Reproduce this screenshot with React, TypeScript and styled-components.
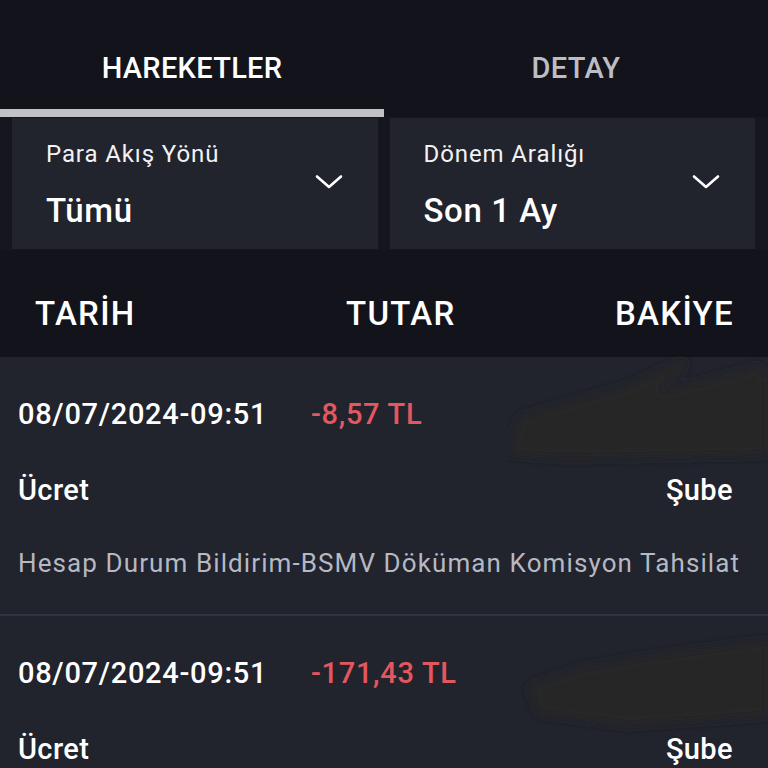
import React, { useState } from 'react';
import styled, { createGlobalStyle } from 'styled-components';

const GlobalStyle = createGlobalStyle`
  *, *::before, *::after {
    box-sizing: border-box;
  }

  body {
    margin: 0;
    background-color: #13131b;
    font-family: Roboto, 'Noto Sans', 'Liberation Sans', sans-serif;
    color: #fff;
  }
`;

const Page = styled.div`
  width: 768px;
  height: 768px;
  overflow: hidden;
  background-color: #13131b;
`;

const TabBar = styled.nav`
  display: grid;
  grid-template-columns: 384px 1fr;
  height: 117px;
`;

const Tab = styled.button<{ $active?: boolean }>`
  display: flex;
  align-items: center;
  justify-content: center;
  padding: 27px 0 0;
  margin: 0;
  border: 0;
  border-bottom: 8px solid ${(p) => (p.$active ? '#c2c2c6' : 'transparent')};
  background: transparent;
  font-family: inherit;
  font-size: 29px;
  font-weight: 500;
  letter-spacing: 0.3px;
  color: ${(p) => (p.$active ? '#ffffff' : '#bdbdc4')};
  cursor: pointer;
`;

const Filters = styled.div`
  display: grid;
  grid-template-columns: 1fr 1fr;
  gap: 12px;
  height: 133px;
  padding: 1px 13px 1px 12px;
  background-color: #16161e;
`;

const FilterCard = styled.div`
  display: flex;
  align-items: center;
  justify-content: space-between;
  padding: 0 35px 0 34px;
  background-color: #21232d;
`;

const FilterText = styled.div`
  display: flex;
  flex-direction: column;
  margin-top: 2px;
`;

const FilterLabel = styled.span`
  font-size: 24px;
  line-height: 28px;
  letter-spacing: 0.9px;
  color: #f2f2f4;
`;

const FilterValue = styled.span`
  margin-top: 24px;
  font-size: 33px;
  line-height: 38px;
  font-weight: 500;
  letter-spacing: 0.6px;
  color: #ffffff;
`;

const Chevron = styled.svg`
  width: 28px;
  height: 16px;
  margin-top: -4px;
  flex-shrink: 0;
`;

const TableHeader = styled.div`
  display: grid;
  grid-template-columns: 311px 1fr auto;
  align-items: center;
  height: 107px;
  padding: 20px 35px 0;
  font-size: 33px;
  font-weight: 500;
  line-height: 40px;
  letter-spacing: 1.3px;
  color: #ffffff;
  background-color: #13131b;
`;

const HeaderCell = styled.span<{ $align?: 'left' | 'right' }>`
  text-align: ${(p) => p.$align ?? 'left'};
  margin-right: ${(p) => (p.$align === 'right' ? '-1px' : '0')};
`;

const List = styled.ul`
  margin: 0;
  padding: 0;
  list-style: none;
  background-color: #21232d;
`;

const Item = styled.li`
  position: relative;
  padding: 37px 35px 31px 18px;
  border-bottom: 2px solid #313444;
`;

const TopRow = styled.div`
  display: grid;
  grid-template-columns: 293px auto;
  font-size: 29px;
  line-height: 40px;
  font-weight: 500;
  letter-spacing: 0.7px;
`;

const DateText = styled.span`
  color: #ffffff;
`;

const Amount = styled.span<{ $negative?: boolean }>`
  color: ${(p) => (p.$negative ? '#e2585e' : '#5fd38a')};
`;

const MetaRow = styled.div`
  display: flex;
  justify-content: space-between;
  margin-top: 36px;
  font-size: 29px;
  line-height: 40px;
  font-weight: 500;
  letter-spacing: 0.4px;
  color: #ffffff;
`;

const Description = styled.p`
  margin: 33px -20px 0 0;
  font-size: 26px;
  line-height: 40px;
  letter-spacing: 1.1px;
  color: #b6b8c2;
  white-space: nowrap;
`;

const Redaction = styled.svg`
  position: absolute;
  top: -20px;
  right: 0;
  width: 260px;
  height: 150px;
  pointer-events: none;
`;

type Movement = {
  date: string;
  amount: string;
  type: string;
  channel: string;
  description: string;
};

const movements: Movement[] = [
  {
    date: '08/07/2024-09:51',
    amount: '-8,57 TL',
    type: 'Ücret',
    channel: 'Şube',
    description: 'Hesap Durum Bildirim-BSMV Döküman Komisyon Tahsilat',
  },
  {
    date: '08/07/2024-09:51',
    amount: '-171,43 TL',
    type: 'Ücret',
    channel: 'Şube',
    description: 'Hesap Durum Bildirim Döküman Komisyon Tahsilat',
  },
];

function ChevronDown() {
  return (
    <Chevron viewBox="0 0 28 16" fill="none">
      <path
        d="M2 2.5 L14 13 L26 2.5"
        stroke="#ffffff"
        strokeWidth="2.6"
        strokeLinecap="round"
        strokeLinejoin="round"
      />
    </Chevron>
  );
}

// scribble that hides the balance column
function Smudge({ id, variant }: { id: string; variant: number }) {
  const shape =
    variant === 0
      ? 'M120 48 L175 22 L178 30 L150 55 L232 34 L250 28 L260 40 L260 118 L60 122 L0 118 L10 80 Z'
      : 'M70 72 L140 60 L260 44 L260 120 L120 130 L30 118 L20 90 Z';
  return (
    <Redaction viewBox="0 0 260 150">
      <defs>
        <filter id={id} x="-20%" y="-20%" width="140%" height="140%">
          <feGaussianBlur stdDeviation="5" />
        </filter>
      </defs>
      <path d={shape} fill="#252528" filter={`url(#${id})`} />
    </Redaction>
  );
}

export default function App() {
  const [activeTab, setActiveTab] = useState(0);

  return (
    <Page>
      <GlobalStyle />
      <TabBar>
        <Tab $active={activeTab === 0} onClick={() => setActiveTab(0)}>
          HAREKETLER
        </Tab>
        <Tab $active={activeTab === 1} onClick={() => setActiveTab(1)}>
          DETAY
        </Tab>
      </TabBar>
      <Filters>
        <FilterCard>
          <FilterText>
            <FilterLabel>Para Akış Yönü</FilterLabel>
            <FilterValue>Tümü</FilterValue>
          </FilterText>
          <ChevronDown />
        </FilterCard>
        <FilterCard>
          <FilterText>
            <FilterLabel>Dönem Aralığı</FilterLabel>
            <FilterValue>Son 1 Ay</FilterValue>
          </FilterText>
          <ChevronDown />
        </FilterCard>
      </Filters>
      <TableHeader>
        <HeaderCell>TARİH</HeaderCell>
        <HeaderCell>TUTAR</HeaderCell>
        <HeaderCell $align="right">BAKİYE</HeaderCell>
      </TableHeader>
      <List>
        {movements.map((m, i) => (
          <Item key={i}>
            <TopRow>
              <DateText>{m.date}</DateText>
              <Amount $negative={m.amount.startsWith('-')}>{m.amount}</Amount>
            </TopRow>
            <MetaRow>
              <span>{m.type}</span>
              <span>{m.channel}</span>
            </MetaRow>
            <Description>{m.description}</Description>
            <Smudge id={`smudge-${i}`} variant={i} />
          </Item>
        ))}
      </List>
    </Page>
  );
}
